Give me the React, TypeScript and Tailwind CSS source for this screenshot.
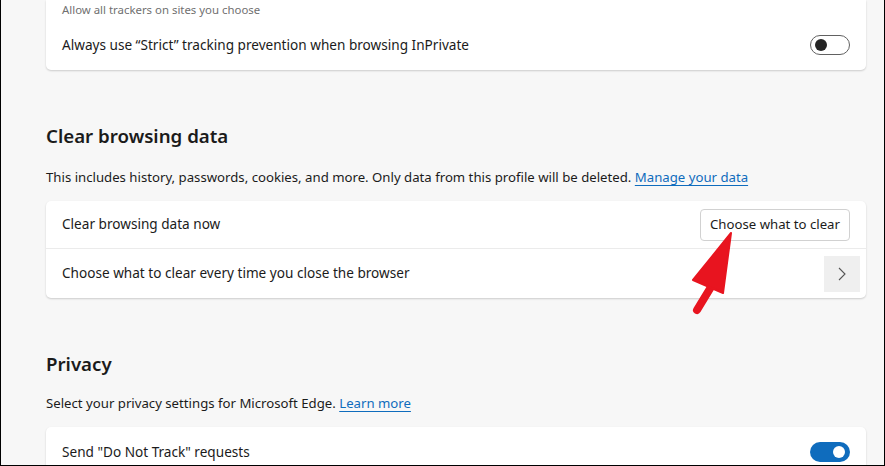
import React from "react";

function Toggle({ on }: { on: boolean }) {
  if (on) {
    return (
      <div className="w-[40px] h-[20px] rounded-full bg-[#0f6cbd] flex items-center justify-end pr-[5px]">
        <div className="w-[12px] h-[12px] rounded-full bg-white" />
      </div>
    );
  }
  return (
    <div className="w-[40px] h-[20px] rounded-full border border-[#616161] bg-white flex items-center pl-[4px]">
      <div className="w-[12px] h-[12px] rounded-full bg-[#242424]" />
    </div>
  );
}

export default function App() {
  return (
    <div
      className="relative w-[885px] h-[466px] overflow-hidden bg-[#f7f7f7] border-l border-r border-b border-black text-[#1b1b1b]"
      style={{ fontFamily: '"Noto Sans", "Segoe UI", sans-serif' }}
    >
      <div className="pl-[45px] pr-[18px]">
        {/* top card (partially scrolled) */}
        <div className="bg-white rounded-b-[5px] shadow-[0_1px_2px_rgba(0,0,0,0.18)]">
          <div className="pl-[16px] h-[20px] flex items-center text-[11.4px] text-[#707070]">
            Allow all trackers on sites you choose
          </div>
          <div className="pl-[16px] pr-[16px] h-[50px] flex items-center justify-between text-[13.6px]">
            <span>Always use “Strict” tracking prevention when browsing InPrivate</span>
            <Toggle on={false} />
          </div>
        </div>

        {/* Clear browsing data */}
        <h2 className="mt-[52px] text-[18.7px] font-semibold leading-[28px]">Clear browsing data</h2>
        <p className="mt-[17px] text-[13.2px] leading-[20px]">
          This includes history, passwords, cookies, and more. Only data from this profile will be deleted.{" "}
          <span className="text-[#0f6cbd] underline underline-offset-[3px]">Manage your data</span>
        </p>
        <div className="mt-[14px] bg-white rounded-[5px] shadow-[0_1px_2px_rgba(0,0,0,0.18)]">
          <div className="h-[48px] pl-[16px] pr-[16px] flex items-center justify-between text-[13.6px] border-b border-[#ebebeb]">
            <span>Clear browsing data now</span>
            <div className="h-[32px] w-[150px] flex items-center justify-center border border-[#d1d1d1] rounded-[4px] bg-white text-[13.2px]">
              Choose what to clear
            </div>
          </div>
          <div className="h-[49px] pl-[16px] pr-[6px] flex items-center justify-between text-[13.6px]">
            <span>Choose what to clear every time you close the browser</span>
            <div className="w-[36px] h-[36px] bg-[#efefef] flex items-center justify-center">
              <svg width="12" height="16" viewBox="0 0 12 16" fill="none">
                <path d="M3 2 L9 8 L3 14" stroke="#555" strokeWidth="1.1" />
              </svg>
            </div>
          </div>
        </div>

        {/* Privacy */}
        <h2 className="mt-[52px] text-[18.7px] font-semibold leading-[28px]">Privacy</h2>
        <p className="mt-[15px] text-[13.2px] leading-[20px]">
          Select your privacy settings for Microsoft Edge.{" "}
          <span className="text-[#0f6cbd] underline underline-offset-[3px]">Learn more</span>
        </p>
        <div className="mt-[14px] bg-white rounded-t-[5px] shadow-[0_1px_2px_rgba(0,0,0,0.18)]">
          <div className="h-[50px] pl-[16px] pr-[16px] flex items-center justify-between text-[13.6px]">
            <span>Send "Do Not Track" requests</span>
            <Toggle on={true} />
          </div>
        </div>
      </div>

      {/* red annotation arrow */}
      <svg className="absolute left-0 top-0 pointer-events-none" width="885" height="466">
        <line x1="710" y1="287" x2="696" y2="310" stroke="#e8141f" strokeWidth="8" strokeLinecap="round" />
        <polygon points="730,233 692,280 722,293" fill="#e8141f" stroke="#e8141f" strokeWidth="2" strokeLinejoin="round" />
      </svg>
    </div>
  );
}
